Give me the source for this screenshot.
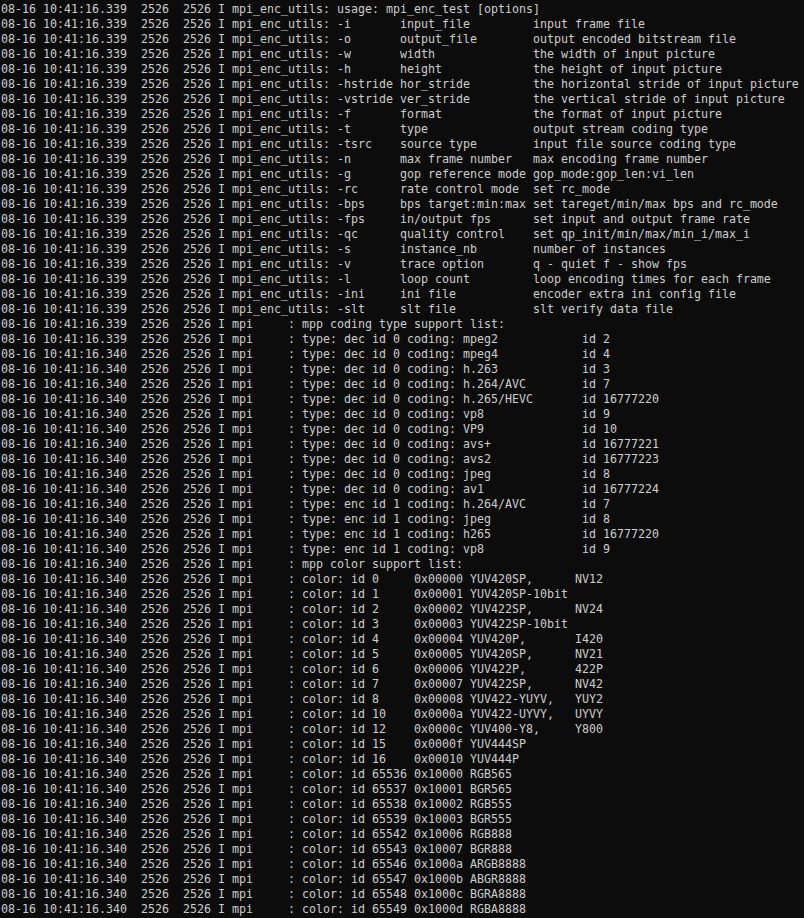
const pre = (ms: string) => `08-16 10:41:16.${ms}  2526  2526 I `;

const opts: [string, string, string][] = [
  ["-i", "input_file", "input frame file"],
  ["-o", "output_file", "output encoded bitstream file"],
  ["-w", "width", "the width of input picture"],
  ["-h", "height", "the height of input picture"],
  ["-hstride", "hor_stride", "the horizontal stride of input picture"],
  ["-vstride", "ver_stride", "the vertical stride of input picture"],
  ["-f", "format", "the format of input picture"],
  ["-t", "type", "output stream coding type"],
  ["-tsrc", "source type", "input file source coding type"],
  ["-n", "max frame number", "max encoding frame number"],
  ["-g", "gop reference mode", "gop_mode:gop_len:vi_len"],
  ["-rc", "rate control mode", "set rc_mode"],
  ["-bps", "bps target:min:max", "set tareget/min/max bps and rc_mode"],
  ["-fps", "in/output fps", "set input and output frame rate"],
  ["-qc", "quality control", "set qp_init/min/max/min_i/max_i"],
  ["-s", "instance_nb", "number of instances"],
  ["-v", "trace option", "q - quiet f - show fps"],
  ["-l", "loop count", "loop encoding times for each frame"],
  ["-ini", "ini file", "encoder extra ini config file"],
  ["-slt", "slt file", "slt verify data file"],
];

const codings: [string, number, string, number][] = [
  ["dec", 0, "mpeg2", 2],
  ["dec", 0, "mpeg4", 4],
  ["dec", 0, "h.263", 3],
  ["dec", 0, "h.264/AVC", 7],
  ["dec", 0, "h.265/HEVC", 16777220],
  ["dec", 0, "vp8", 9],
  ["dec", 0, "VP9", 10],
  ["dec", 0, "avs+", 16777221],
  ["dec", 0, "avs2", 16777223],
  ["dec", 0, "jpeg", 8],
  ["dec", 0, "av1", 16777224],
  ["enc", 1, "h.264/AVC", 7],
  ["enc", 1, "jpeg", 8],
  ["enc", 1, "h265", 16777220],
  ["enc", 1, "vp8", 9],
];

const colors: [number, string, string?][] = [
  [0, "YUV420SP,", "NV12"],
  [1, "YUV420SP-10bit"],
  [2, "YUV422SP,", "NV24"],
  [3, "YUV422SP-10bit"],
  [4, "YUV420P,", "I420"],
  [5, "YUV420SP,", "NV21"],
  [6, "YUV422P,", "422P"],
  [7, "YUV422SP,", "NV42"],
  [8, "YUV422-YUYV,", "YUY2"],
  [10, "YUV422-UYVY,", "UYVY"],
  [12, "YUV400-Y8,", "Y800"],
  [15, "YUV444SP"],
  [16, "YUV444P"],
  [65536, "RGB565"],
  [65537, "BGR565"],
  [65538, "RGB555"],
  [65539, "BGR555"],
  [65542, "RGB888"],
  [65543, "BGR888"],
  [65546, "ARGB8888"],
  [65547, "ABGR8888"],
  [65548, "BGRA8888"],
  [65549, "RGBA8888"],
];

// build the log text
const lines: string[] = [];
lines.push(pre("339") + "mpi_enc_utils: usage: mpi_enc_test [options]");
opts.forEach(([o, d, desc]) => {
  lines.push(pre("339") + "mpi_enc_utils: " + o.padEnd(9) + d.padEnd(19) + desc);
});
lines.push(pre("339") + "mpi     : mpp coding type support list:");
codings.forEach(([t, n, name, id], i) => {
  lines.push(pre(i === 0 ? "339" : "340") + `mpi     : type: ${t} id ${n} coding: ` + name.padEnd(17) + "id " + id);
});
lines.push(pre("340") + "mpi     : mpp color support list:");
colors.forEach(([id, name, fcc]) => {
  const hex = "0x" + id.toString(16).padStart(5, "0");
  lines.push(pre("340") + "mpi     : color: id " + String(id).padEnd(6) + hex + " " + (fcc ? name.padEnd(15) + fcc : name));
});

export default function App() {
  return (
    <div className="w-[804px] h-[918px] overflow-hidden bg-[#0c0c0c] text-[#cccccc]">
      <div className="pl-px pt-[2px] font-['DejaVu_Sans_Mono',monospace] text-[11.63px] leading-[15px] whitespace-pre">
        {lines.map((l, i) => (
          <div key={i}>{l}</div>
        ))}
      </div>
    </div>
  );
}
